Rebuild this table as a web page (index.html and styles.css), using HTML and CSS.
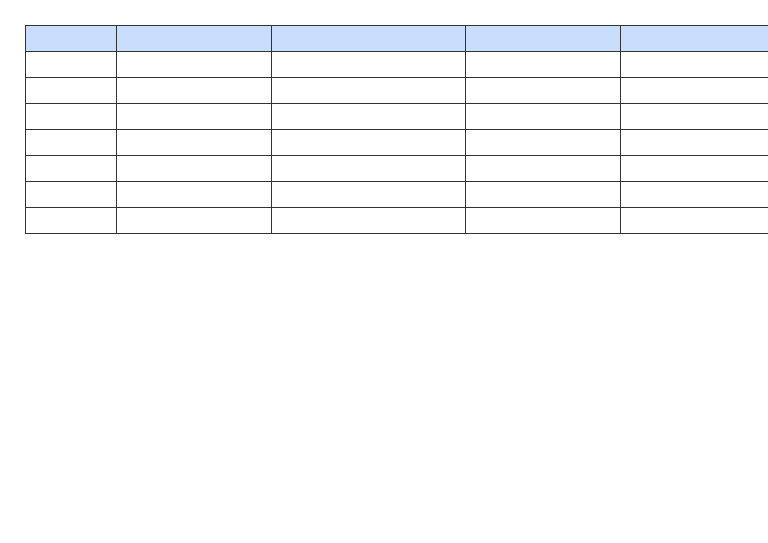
FILE: index.html
```html
<!DOCTYPE html>
<html>
<head>
<meta charset="utf-8">
<link rel="stylesheet" href="styles.css">
</head>
<body>
<table class="grid">
  <colgroup>
    <col class="c1"><col class="c2"><col class="c3"><col class="c4"><col class="c5">
  </colgroup>
  <thead>
    <tr><th></th><th></th><th></th><th></th><th></th></tr>
  </thead>
  <tbody>
    <tr><td></td><td></td><td></td><td></td><td></td></tr>
    <tr><td></td><td></td><td></td><td></td><td></td></tr>
    <tr><td></td><td></td><td></td><td></td><td></td></tr>
    <tr><td></td><td></td><td></td><td></td><td></td></tr>
    <tr><td></td><td></td><td></td><td></td><td></td></tr>
    <tr><td></td><td></td><td></td><td></td><td></td></tr>
    <tr><td></td><td></td><td></td><td></td><td></td></tr>
  </tbody>
</table>
</body>
</html>
```
FILE: styles.css
```css
html { overflow: hidden; background: #fff; }
body {
  margin: 0;
  padding: 25px;
  font-family: "Liberation Sans", Arial, sans-serif;
  width: 1000px;
}
.grid {
  border-collapse: collapse;
  table-layout: fixed;
  width: 776px;
}
.c1 { width: 91px; }
.c2 { width: 155px; }
.c3 { width: 194px; }
.c4 { width: 155px; }
.c5 { width: 181px; }
.grid th, .grid td {
  border: 1px solid #333;
  height: 25px;
  padding: 0;
}
.grid th { background: #c9ddfd; }
```
